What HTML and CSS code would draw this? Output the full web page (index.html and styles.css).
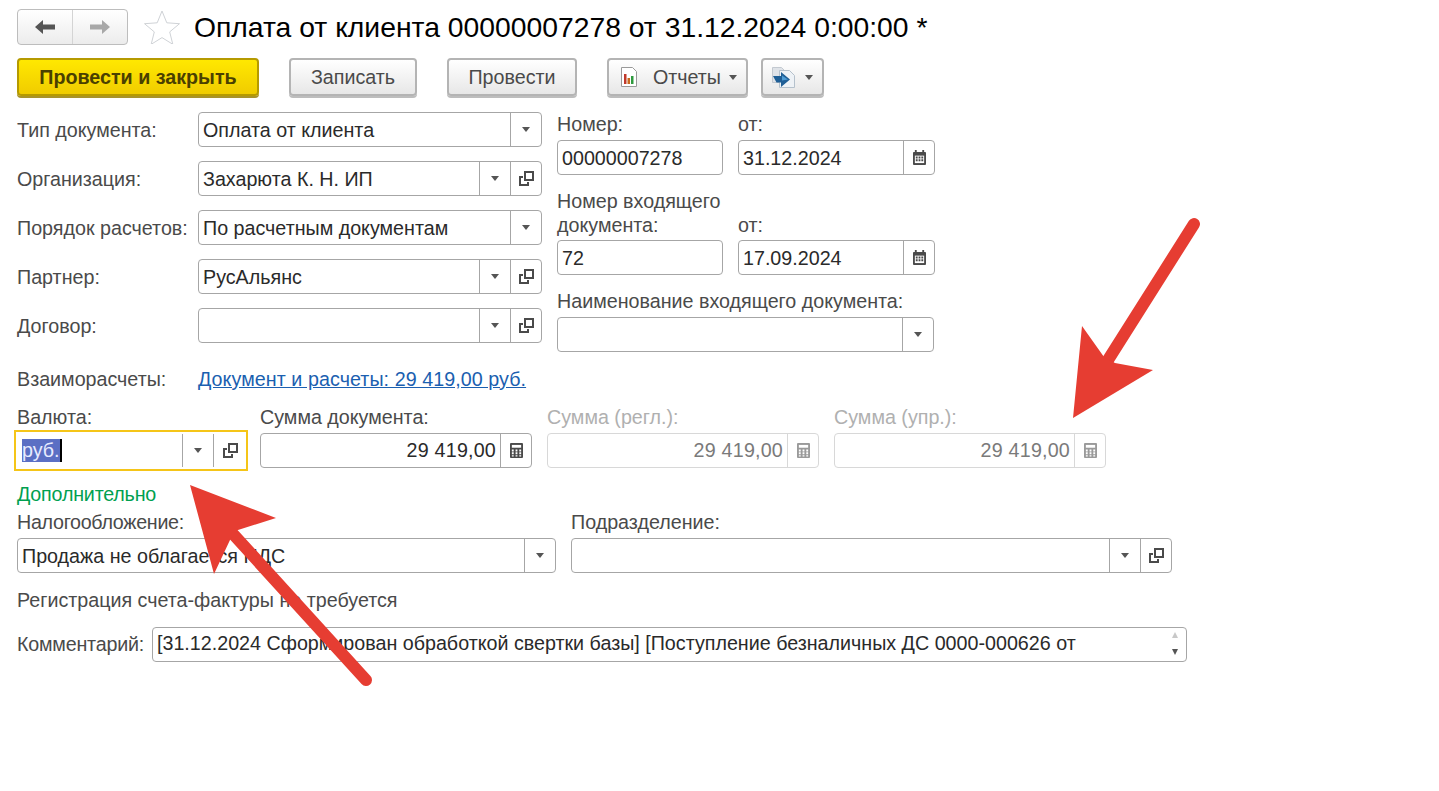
FILE: index.html
```html
<!DOCTYPE html>
<html lang="ru">
<head>
<meta charset="utf-8">
<title>Оплата от клиента</title>
<link rel="stylesheet" href="styles.css">
</head>
<body>
<svg class="sprite" width="0" height="0" aria-hidden="true">
  <symbol id="i-open" viewBox="0 0 15 15"><path d="M6 1h8v8H6z M4 6H1v8h8v-3" fill="none" stroke="currentColor" stroke-width="2"/></symbol>
  <symbol id="i-date" viewBox="0 0 14 16"><path d="M0 3a1 1 0 0 1 1-1h1V0h2v2h6V0h2v2h1a1 1 0 0 1 1 1v12a1 1 0 0 1-1 1H1a1 1 0 0 1-1-1z" fill="currentColor"/><path d="M2 6h10v8H2z" fill="#fff"/><path d="M3 7h2v2H3zM6 7h2v2H6zM9 7h2v2H9zM3 10h2v2H3zM6 10h2v2H6zM9 10h2v2H9z" fill="currentColor"/></symbol>
  <symbol id="i-calc" viewBox="0 0 14 16"><path d="M0 1a1 1 0 0 1 1-1h12a1 1 0 0 1 1 1v14a1 1 0 0 1-1 1H1a1 1 0 0 1-1-1z" fill="currentColor"/><path d="M2 2h10v3H2z" fill="#fff"/><path d="M2 7h2v2H2zM6 7h2v2H6zM10 7h2v2h-2zM2 10h2v2H2zM6 10h2v2H6zM10 10h2v2h-2zM2 13h2v1.500H2zM6 13h2v1.500H6zM10 13h2v1.500h-2z" fill="#fff"/></symbol>
  <symbol id="i-drop" viewBox="0 0 10 6"><path d="M0 0h10L5 6z" fill="currentColor"/></symbol>
</svg>

<main class="page">
  <header class="head">
    <div class="nav">
      <span class="nav-cell">
        <svg class="nav-icon dark" viewBox="0 0 20 14"><path d="M0 7l8-7v4.500h12v5H8V14z" fill="currentColor"/></svg>
      </span>
      <span class="nav-cell">
        <svg class="nav-icon light" viewBox="0 0 20 14"><path d="M20 7l-8-7v4.500H0v5h12V14z" fill="currentColor"/></svg>
      </span>
    </div>
    <svg class="star" viewBox="0 0 36 34"><path d="M18 1l4.800 11.800 12.700.900-9.800 8.200 3.100 12.400L18 27.600 7.200 34.300l3.100-12.400L.5 13.700l12.700-.9z" fill="#fff" stroke="#cfd2d6" stroke-width="1"/></svg>
    <h1 class="title">Оплата от клиента 00000007278 от 31.12.2024 0:00:00 *</h1>
  </header>

  <nav class="toolbar">
    <button class="btn primary w-post-close">Провести и закрыть</button>
    <button class="btn w-save">Записать</button>
    <button class="btn w-post">Провести</button>
    <button class="btn w-reports">
      <svg class="rep-icon" viewBox="0 0 16 20"><path d="M.5.500h11l4 4v15H.5z" fill="#fff" stroke="#9a9a9a"/><path d="M3 7h2.500v10H3z" fill="#c0392b"/><path d="M6.500 11H9v6H6.500z" fill="#c8691e"/><path d="M10 9h2.500v8H10z" fill="#2e9a3e"/></svg>
      <span>Отчеты</span>
      <svg class="drop-small" viewBox="0 0 10 6"><use href="#i-drop"/></svg>
    </button>
    <button class="btn w-more">
      <svg class="doc-icon" viewBox="0 0 23 21"><path d="M.5.500h9l3 3v12H.5z" fill="#dfe3e8" stroke="#c3c9d0"/><path d="M7.500 3.500h10l5 5v12h-15z" fill="#eef2f6" stroke="#b5c1cc"/><path d="M1 9h8V5l9 7.500L9 20v-4.500H4.500z" fill="#1f5f96"/><path d="M10 8.500l6 4-6 1z" fill="#4d9bd4"/></svg>
      <svg class="drop-small" viewBox="0 0 10 6"><use href="#i-drop"/></svg>
    </button>
  </nav>

  <section class="top">
    <div class="left-col">
      <div class="row"><label class="label">Тип документа:</label>
        <div class="field w-left"><span class="value">Оплата от клиента</span><span class="cell"><svg class="drop"><use href="#i-drop"/></svg></span></div></div>
      <div class="row"><label class="label">Организация:</label>
        <div class="field w-left"><span class="value">Захарюта К. Н. ИП</span><span class="cell"><svg class="drop"><use href="#i-drop"/></svg></span><span class="cell"><svg class="open"><use href="#i-open"/></svg></span></div></div>
      <div class="row"><label class="label">Порядок расчетов:</label>
        <div class="field w-left"><span class="value">По расчетным документам</span><span class="cell"><svg class="drop"><use href="#i-drop"/></svg></span></div></div>
      <div class="row"><label class="label">Партнер:</label>
        <div class="field w-left"><span class="value">РусАльянс</span><span class="cell"><svg class="drop"><use href="#i-drop"/></svg></span><span class="cell"><svg class="open"><use href="#i-open"/></svg></span></div></div>
      <div class="row"><label class="label">Договор:</label>
        <div class="field w-left"><span class="value"></span><span class="cell"><svg class="drop"><use href="#i-drop"/></svg></span><span class="cell"><svg class="open"><use href="#i-open"/></svg></span></div></div>
    </div>

    <div class="right-col">
      <label class="cap r1">Номер:</label>
      <label class="cap r1">от:</label>
      <div class="field"><span class="value">00000007278</span></div>
      <div class="field"><span class="value">31.12.2024</span><span class="cell"><svg class="ico"><use href="#i-date"/></svg></span></div>
      <label class="cap r2">Номер входящего документа:</label>
      <label class="cap r2">от:</label>
      <div class="field"><span class="value">72</span></div>
      <div class="field"><span class="value">17.09.2024</span><span class="cell"><svg class="ico"><use href="#i-date"/></svg></span></div>
      <label class="cap r3 span2">Наименование входящего документа:</label>
      <div class="field span2 w-name"><span class="value"></span><span class="cell"><svg class="drop"><use href="#i-drop"/></svg></span></div>
    </div>
  </section>

  <div class="mutual">
    <span class="label">Взаиморасчеты:</span>
    <a class="link" href="#">Документ и расчеты: 29 419,00 руб.</a>
  </div>

  <section class="sums">
    <div class="col w-cur">
      <label class="cap">Валюта:</label>
      <div class="field focus"><span class="value"><span class="sel">руб.</span><span class="caret"></span></span><span class="cell"><svg class="drop"><use href="#i-drop"/></svg></span><span class="cell"><svg class="open"><use href="#i-open"/></svg></span></div>
    </div>
    <div class="col w-sum">
      <label class="cap">Сумма документа:</label>
      <div class="field"><span class="value num">29 419,00</span><span class="cell"><svg class="ico"><use href="#i-calc"/></svg></span></div>
    </div>
    <div class="col w-sum off">
      <label class="cap">Сумма (регл.):</label>
      <div class="field"><span class="value num">29 419,00</span><span class="cell"><svg class="ico"><use href="#i-calc"/></svg></span></div>
    </div>
    <div class="col w-sum off">
      <label class="cap">Сумма (упр.):</label>
      <div class="field"><span class="value num">29 419,00</span><span class="cell"><svg class="ico"><use href="#i-calc"/></svg></span></div>
    </div>
  </section>

  <h2 class="extra">Дополнительно</h2>

  <section class="tax">
    <div class="col w-tax">
      <label class="cap tight">Налогообложение:</label>
      <div class="field"><span class="value">Продажа не облагается НДС</span><span class="cell"><svg class="drop"><use href="#i-drop"/></svg></span></div>
    </div>
    <div class="col w-dep">
      <label class="cap">Подразделение:</label>
      <div class="field"><span class="value"></span><span class="cell"><svg class="drop"><use href="#i-drop"/></svg></span><span class="cell"><svg class="open"><use href="#i-open"/></svg></span></div>
    </div>
  </section>

  <p class="note">Регистрация счета-фактуры не требуется</p>

  <div class="comment">
    <label class="label w-comment">Комментарий:</label>
    <div class="field w-area"><span class="value clip">[31.12.2024 Сформирован обработкой свертки базы] [Поступление безналичных ДС 0000-000626 от</span>
      <span class="scroll"><i class="up"></i><i class="down"></i></span>
    </div>
  </div>
</main>

<svg class="arrows" viewBox="0 0 1439 791" aria-hidden="true">
  <path d="M366 680L234 535" stroke="#e63d32" stroke-width="12" stroke-linecap="round" fill="none"/>
  <path d="M190 485L276 518 238 530 230 540 214 574z" fill="#e63d32"/>
  <path d="M1194 224L1108 360" stroke="#e63d32" stroke-width="12" stroke-linecap="round" fill="none"/>
  <path d="M1073 418L1082 326 1104 357 1115 363 1153 370z" fill="#e63d32"/>
</svg>
</body>
</html>
```
FILE: styles.css
```css
* { box-sizing: border-box; }
html, body { margin: 0; height: 100%; overflow: hidden; background: #fff; }
body { font-family: "Liberation Sans", Arial, sans-serif; font-size: 19.7px; color: #4a4a4a; position: relative; }
.sprite { position: absolute; }
.page { padding: 9px 0 0 17px; width: 1439px; height: 791px; }

.head { display: flex; align-items: center; height: 36px; }
.nav { display: flex; width: 111px; height: 36px; border: 1px solid #bdbdbd; border-radius: 4px; background: linear-gradient(#fff, #ececec); }
.nav-cell { flex: 1; display: flex; align-items: center; justify-content: center; }
.nav-cell + .nav-cell { border-left: 1px solid #d4d4d4; }
.nav-icon { width: 20px; height: 14px; }
.dark { color: #555; }
.light { color: #a8a8a8; }
.star { width: 36px; height: 34px; margin-left: 16px; }
.title { margin: 0 0 0 14px; font-size: 28.3px; font-weight: 400; color: #000; white-space: nowrap; line-height: 36px; }

.toolbar { display: flex; gap: 30px; margin-top: 13px; height: 39px; }
.btn { display: flex; align-items: center; justify-content: center; height: 38px; padding: 0; border: 2px solid #b4b4b4; border-radius: 4px; background: linear-gradient(#fff, #e7e7e7); box-shadow: 0 2px 0 #bdbdbd; font: inherit; color: #4a4a4a; }
.primary { background: linear-gradient(#ffe800, #f0cc00); border-color: #b59a00; box-shadow: 0 2px 0 #a8932a; font-weight: 700; color: #4a4000; }
.w-post-close { width: 242px; }
.w-save { width: 128px; }
.w-post { width: 130px; }
.w-reports { width: 141px; gap: 16px; padding-left: 3px; }
.w-more { width: 63px; gap: 10px; margin-left: -17px; }
.rep-icon { width: 16px; height: 20px; }
.doc-icon { width: 23px; height: 21px; }
.drop-small { width: 8px; height: 5px; color: #555; }
.w-reports .drop-small { margin-left: -8px; }

.top { display: flex; margin-top: 15px; }
.left-col { display: flex; flex-direction: column; gap: 14px; }
.row { display: flex; align-items: center; }
.label { width: 181px; flex: none; white-space: nowrap; }
.row .label { padding-top: 2px; }
.w-left { width: 344px; }

.right-col { display: grid; grid-template-columns: 166px 197px; grid-template-rows: 28px 35px 65px 35px 42px 35px; column-gap: 15px; margin-left: 15px; align-self: flex-start; }
.cap { display: block; line-height: 24px; align-self: end; padding-bottom: 4px; }
.r2 { padding-bottom: 3px; }
.span2 { grid-column: span 2; }
.w-name { width: 377px; }
.tight { letter-spacing: -.3px; }

.field { display: flex; height: 35px; border: 1px solid #a6a6a6; border-radius: 4px; background: #fff; color: #2a2a2a; }
.value { flex: 1; min-width: 0; padding: 1px 0 0 4px; line-height: 33px; white-space: nowrap; }
.num { text-align: right; padding: 0 4px 0 0; letter-spacing: .2px; }
.clip { overflow: hidden; }
.cell { width: 31px; flex: none; display: flex; align-items: center; justify-content: center; border-left: 1px solid #a6a6a6; }
.drop { width: 8px; height: 5px; color: #555; }
.open { width: 15px; height: 15px; color: #4a4a4a; }
.ico { width: 13px; height: 15px; color: #4a4a4a; }

.mutual { display: flex; margin-top: 15px; line-height: 24px; }
.link { color: #1b5fb0; text-decoration: underline; white-space: nowrap; letter-spacing: .06px; }

.sums { display: flex; gap: 15px; margin-top: 14px; }
.col { display: flex; flex-direction: column; }
.col .cap { align-self: flex-start; }
.w-cur { width: 228px; }
.w-sum { width: 272px; }
.focus { height: 41px; margin: -3px; border: 2px solid #f5c518; border-radius: 0; padding: 2px 0; }
.focus .value { display: flex; align-items: center; padding: 0 0 0 6px; line-height: 23px; }
.focus .cell:last-child { width: 33px; }
.sel { background: #5b6fc4; color: #e8ecff; }
.caret { width: 2px; height: 23px; background: #000; }
.off .cap { color: #b0b0b0; }
.off .field { border-color: #d8d8d8; color: #7a7a7a; }
.off .cell { border-color: #d8d8d8; }
.off .ico { color: #9a9a9a; }

.extra { margin: 14px 0 0; font-size: inherit; font-weight: 400; line-height: 24px; color: #00a050; letter-spacing: -.2px; }
.tax { display: flex; gap: 15px; margin-top: 4px; }
.w-tax { width: 539px; }
.w-dep { width: 601px; }

.note { margin: 15px 0 0; line-height: 24px; }

.comment { display: flex; align-items: center; margin-top: 15px; }
.w-comment { width: 135px; letter-spacing: -.2px; }
.w-area { width: 1035px; }
.w-area .value { padding-top: 0; line-height: 31px; }
.scroll { width: 22px; flex: none; display: flex; flex-direction: column; align-items: center; justify-content: space-between; padding: 4px 0 6px; }
.up, .down { display: block; width: 0; height: 0; border-left: 3.500px solid transparent; border-right: 3.500px solid transparent; }
.up { border-bottom: 6px solid #c8c8c8; }
.down { border-top: 6px solid #555; }

.arrows { position: absolute; left: 0; top: 0; width: 1439px; height: 791px; pointer-events: none; }
```
